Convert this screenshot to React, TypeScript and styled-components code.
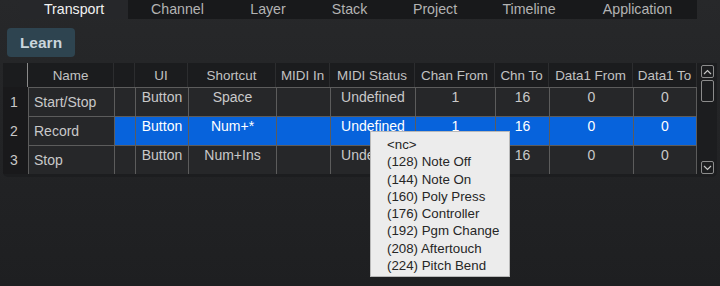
import React from "react";
import styled, { createGlobalStyle } from "styled-components";

const GlobalStyle = createGlobalStyle`
  html, body {
    margin: 0;
    padding: 0;
    width: 720px;
    height: 286px;
    overflow: hidden;
    background: linear-gradient(#27282a, #1e1f21);
    font-family: "Liberation Sans", Arial, sans-serif;
  }
`;

const Page = styled.div`
  position: relative;
  width: 720px;
  height: 286px;
`;

const TabBar = styled.div`
  display: flex;
  margin-left: 20px;
  width: 677px;
  height: 19px;
  background: #18191b;
`;

const Tab = styled.div<{ $active?: boolean; $w: number }>`
  width: ${({ $w }) => $w}px;
  flex: 0 0 auto;
  text-align: center;
  font-size: 14.2px;
  line-height: 19px;
  color: ${({ $active }) => ($active ? "#f2f2f2" : "#b3b3b3")};
  background: ${({ $active }) => ($active ? "#26272a" : "transparent")};
`;

const LearnButton = styled.button`
  display: block;
  margin: 9px 0 0 7px;
  width: 68px;
  height: 29px;
  border: none;
  border-radius: 4px;
  background: #2e4450;
  color: #c9d5dc;
  font-family: "Liberation Sans", Arial, sans-serif;
  font-weight: bold;
  font-size: 15.5px;
  padding: 0;
`;

const Panel = styled.div`
  display: flex;
  margin: 6px 0 0 3px;
  width: 714px;
  height: 114px;
  background: #1c1d1f;
  border-radius: 0 0 5px 5px;
  overflow: hidden;
`;

const Grid = styled.div`
  display: grid;
  grid-template-columns: 25px 86px 21px 53px 88px 54px 85px 80px 54px 84px 64px;
  grid-template-rows: 24px 29px 29px 29px;
  width: 694px;
  align-self: flex-start;
`;

const HeadCell = styled.div<{ $edge?: boolean }>`
  background: #1b1c1e;
  color: #c2c2c2;
  font-size: 13.4px;
  line-height: 25px;
  text-align: center;
  white-space: nowrap;
  overflow: hidden;
  border-right: 1px solid ${({ $edge }) => ($edge ? "#8a8a8a" : "#2c2d2f")};
`;

const NumCell = styled.div`
  background: #19191b;
  color: #c8c8c8;
  font-size: 14px;
  display: flex;
  align-items: center;
  padding-left: 7px;
`;

const Cell = styled.div<{ $sel?: boolean; $align?: "left" | "center"; $mid?: boolean }>`
  background: ${({ $sel }) => ($sel ? "#0763dc" : "#262729")};
  color: ${({ $sel }) => ($sel ? "#ffffff" : "#c9c9c9")};
  font-size: 14px;
  line-height: 16px;
  white-space: nowrap;
  overflow: hidden;
  border-top: 1px solid #5c5c5c;
  border-left: 1px solid #5c5c5c;
  display: flex;
  justify-content: ${({ $align }) => ($align === "left" ? "flex-start" : "center")};
  align-items: ${({ $mid }) => ($mid ? "center" : "flex-start")};
  padding: ${({ $align }) => ($align === "left" ? "0 0 0 5px" : "1px 0 0 0")};
`;

const LastCell = styled(Cell)`
  border-right: 1px solid #5c5c5c;
`;

const ScrollBar = styled.div`
  display: flex;
  flex-direction: column;
  align-items: center;
  width: 20px;
  padding: 2px 0 3px;
  box-sizing: border-box;
`;

const ScrollBtn = styled.div`
  width: 13px;
  height: 13px;
  box-sizing: border-box;
  border: 1px solid #8c8c8c;
  border-radius: 2px;
  display: flex;
  align-items: center;
  justify-content: center;
`;

const Thumb = styled.div`
  width: 13px;
  height: 22px;
  margin-top: 2px;
  box-sizing: border-box;
  border: 1px solid #8c8c8c;
  border-radius: 2px;
  flex: 0 0 auto;
`;

const Spacer = styled.div`
  flex: 1;
`;

const Menu = styled.div`
  position: absolute;
  left: 370px;
  top: 131px;
  width: 140px;
  height: 146px;
  box-sizing: border-box;
  background: #ececec;
  border: 1px solid #b9b9b9;
  padding-top: 4px;
`;

const MenuItem = styled.div`
  padding-left: 16px;
  height: 17.3px;
  line-height: 17.3px;
  font-size: 13.3px;
  color: #262626;
  white-space: nowrap;
`;

const tabs: [string, number][] = [
  ["Transport", 108],
  ["Channel", 99],
  ["Layer", 82],
  ["Stack", 81],
  ["Project", 90],
  ["Timeline", 98],
  ["Application", 119],
];
const heads = ["", "Name", "", "UI", "Shortcut", "MIDI In", "MIDI Status", "Chan From", "Chn To", "Data1 From", "Data1 To"];
const rows = [
  ["Start/Stop", "Space"],
  ["Record", "Num+*"],
  ["Stop", "Num+Ins"],
];
const items = [
  "<nc>",
  "(128) Note Off",
  "(144) Note On",
  "(160) Poly Press",
  "(176) Controller",
  "(192) Pgm Change",
  "(208) Aftertouch",
  "(224) Pitch Bend",
];

const Chevron = ({ up }: { up?: boolean }) => (
  <svg width="9" height="6" viewBox="0 0 9 6">
    <path
      d={up ? "M1 5 L4.5 1.5 L8 5" : "M1 1 L4.5 4.5 L8 1"}
      fill="none"
      stroke="#c4c4c4"
      strokeWidth="1.2"
    />
  </svg>
);

export default function App() {
  return (
    <Page>
      <GlobalStyle />
      <TabBar>
        {tabs.map(([t, w], i) => (
          <Tab key={t} $w={w} $active={i === 0}>
            {t}
          </Tab>
        ))}
      </TabBar>
      <LearnButton>Learn</LearnButton>
      <Panel>
        <Grid>
          {heads.map((h, i) => (
            <HeadCell key={i} $edge={i === 0}>
              {h}
            </HeadCell>
          ))}
          {rows.map(([name, key], r) => {
            const sel = r === 1;
            return (
              <React.Fragment key={name}>
                <NumCell>{r + 1}</NumCell>
                <Cell $align="left" $mid>
                  {name}
                </Cell>
                <Cell $sel={sel} />
                <Cell $sel={sel}>Button</Cell>
                <Cell $sel={sel}>{key}</Cell>
                <Cell $sel={sel} />
                <Cell $sel={sel}>Undefined</Cell>
                <Cell $sel={sel}>1</Cell>
                <Cell $sel={sel}>16</Cell>
                <Cell $sel={sel}>0</Cell>
                <LastCell $sel={sel}>0</LastCell>
              </React.Fragment>
            );
          })}
        </Grid>
        <ScrollBar>
          <ScrollBtn>
            <Chevron up />
          </ScrollBtn>
          <Thumb />
          <Spacer />
          <ScrollBtn>
            <Chevron />
          </ScrollBtn>
        </ScrollBar>
      </Panel>
      <Menu>
        {items.map((it) => (
          <MenuItem key={it}>{it}</MenuItem>
        ))}
      </Menu>
    </Page>
  );
}
